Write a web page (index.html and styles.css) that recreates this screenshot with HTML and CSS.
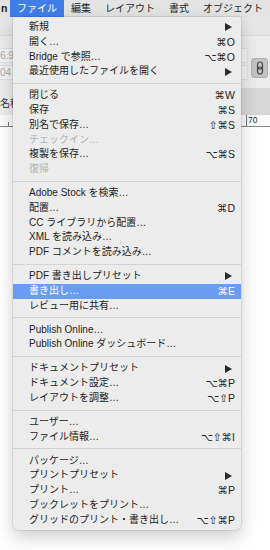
FILE: index.html
```html
<!DOCTYPE html>
<html lang="ja">
<head>
  <meta charset="UTF-8">
  <meta name="viewport" content="width=device-width, initial-scale=1.0">
  <title>ファイル メニュー</title>
  <link rel="stylesheet" href="styles.css">
</head>
<body>
  <div class="screen">

    <div class="menubar">
      <span class="app-name">n</span>
      <span class="menubar-item active">ファイル</span>
      <span class="menubar-item">編集</span>
      <span class="menubar-item">レイアウト</span>
      <span class="menubar-item">書式</span>
      <span class="menubar-item">オブジェクト</span>
    </div>

    <!-- the document window behind the open menu -->
    <div class="app-window">
      <div class="toolbar">
        <div class="toolbar-top"></div>
        <div class="toolbar-main">
          <div class="fields fields-left">
            <div class="field">6.9</div>
            <div class="field">04</div>
          </div>
          <div class="fields fields-right">
            <div class="field"></div>
            <div class="field"></div>
          </div>
          <div class="link-btn">
            <svg width="8" height="14" viewBox="0 0 8 14">
              <rect x="1.5" y="1" width="5" height="7" rx="2.5" fill="none" stroke="#444" stroke-width="1.2"/>
              <rect x="1.5" y="6" width="5" height="7" rx="2.5" fill="none" stroke="#444" stroke-width="1.2"/>
            </svg>
          </div>
        </div>
      </div>
      <div class="panel-band">
        <span class="panel-label">名称</span>
        <span class="panel-fill"></span>
      </div>
      <div class="ruler">
        <span class="ruler-left"><span class="tick"></span></span>
        <span class="ruler-right"><span class="tick"></span>70</span>
      </div>
      <div class="canvas"></div>
    </div>

    <ul class="menu">
      <li class="item"><span class="label">新規</span><span class="arrow"><svg width="7" height="8" viewBox="0 0 7 8"><polygon points="0,0 7,4 0,8"/></svg></span></li>
      <li class="item"><span class="label">開く…</span><span class="key">⌘O</span></li>
      <li class="item"><span class="label">Bridge で参照…</span><span class="key">⌥⌘O</span></li>
      <li class="item"><span class="label">最近使用したファイルを開く</span><span class="arrow"><svg width="7" height="8" viewBox="0 0 7 8"><polygon points="0,0 7,4 0,8"/></svg></span></li>
      <li class="separator"></li>
      <li class="item"><span class="label">閉じる</span><span class="key">⌘W</span></li>
      <li class="item"><span class="label">保存</span><span class="key">⌘S</span></li>
      <li class="item"><span class="label">別名で保存…</span><span class="key">⇧⌘S</span></li>
      <li class="item disabled"><span class="label">チェックイン…</span></li>
      <li class="item"><span class="label">複製を保存…</span><span class="key">⌥⌘S</span></li>
      <li class="item disabled"><span class="label">復帰</span></li>
      <li class="separator"></li>
      <li class="item"><span class="label">Adobe Stock を検索…</span></li>
      <li class="item"><span class="label">配置…</span><span class="key">⌘D</span></li>
      <li class="item"><span class="label">CC ライブラリから配置…</span></li>
      <li class="item"><span class="label">XML を読み込み…</span></li>
      <li class="item"><span class="label">PDF コメントを読み込み…</span></li>
      <li class="separator"></li>
      <li class="item"><span class="label">PDF 書き出しプリセット</span><span class="arrow"><svg width="7" height="8" viewBox="0 0 7 8"><polygon points="0,0 7,4 0,8"/></svg></span></li>
      <li class="item selected"><span class="label">書き出し…</span><span class="key">⌘E</span></li>
      <li class="item"><span class="label">レビュー用に共有…</span></li>
      <li class="separator"></li>
      <li class="item"><span class="label">Publish Online…</span></li>
      <li class="item"><span class="label">Publish Online ダッシュボード…</span></li>
      <li class="separator"></li>
      <li class="item"><span class="label">ドキュメントプリセット</span><span class="arrow"><svg width="7" height="8" viewBox="0 0 7 8"><polygon points="0,0 7,4 0,8"/></svg></span></li>
      <li class="item"><span class="label">ドキュメント設定…</span><span class="key">⌥⌘P</span></li>
      <li class="item"><span class="label">レイアウトを調整…</span><span class="key">⌥⇧P</span></li>
      <li class="separator"></li>
      <li class="item"><span class="label">ユーザー…</span></li>
      <li class="item"><span class="label">ファイル情報…</span><span class="key">⌥⇧⌘I</span></li>
      <li class="separator"></li>
      <li class="item"><span class="label">パッケージ…</span></li>
      <li class="item"><span class="label">プリントプリセット</span><span class="arrow"><svg width="7" height="8" viewBox="0 0 7 8"><polygon points="0,0 7,4 0,8"/></svg></span></li>
      <li class="item"><span class="label">プリント…</span><span class="key">⌘P</span></li>
      <li class="item"><span class="label">ブックレットをプリント…</span></li>
      <li class="item"><span class="label">グリッドのプリント・書き出し…</span><span class="key">⌥⇧⌘P</span></li>
    </ul>

  </div>
</body>
</html>
```

FILE: styles.css
```css
body {
  margin: 0;
  font-family: "Liberation Sans", "Noto Sans CJK JP", sans-serif;
  font-size: 10px;
  color: #222;
  background-color: #fff;
}

.screen {
  position: relative;
  width: 270px;
  height: 550px;
  overflow: hidden;
}

/* menu bar */

.menubar {
  display: flex;
  height: 17px;
  line-height: 17px;
  background-color: #e3e3e3;
  white-space: nowrap;
}

.app-name {
  width: 12px;
  padding-left: 1px;
  font-weight: bold;
  font-size: 10.5px;
}

.menubar-item {
  padding: 0 7px;
  color: #262626;
}

.menubar-item.active {
  background-color: #3f7ee6;
  color: white;
}

/* window behind */

.toolbar-top {
  height: 18px;
  background-color: #e6e6e6;
  border-bottom: 1px solid #dadada;
}

.toolbar-main {
  display: flex;
  height: 52px;
  background-color: #ececec;
}

.fields {
  display: flex;
  flex-direction: column;
  gap: 2px;
  padding-top: 12px;
}

.fields-left {
  margin-left: -22px;
}

.fields-right {
  margin-left: auto;
}

.field {
  width: 34px;
  height: 13px;
  line-height: 13px;
  padding-left: 21px;
  background-color: #f3f3f3;
  border: 1px solid #e0e0e0;
  color: #aaa;
}

.fields-right .field {
  width: 20px;
  padding-left: 0;
}

.link-btn {
  display: flex;
  align-items: center;
  justify-content: center;
  width: 15px;
  height: 18px;
  margin: 22px 2px 0 3px;
  background-color: #c4c4c4;
  border: 1px solid #b0b0b0;
  border-radius: 3px;
}

.panel-band {
  display: flex;
  height: 27px;
}

.panel-label {
  width: 13px;
  padding-top: 7px;
  background-color: #ececec;
  white-space: nowrap;
  color: #333;
}

.panel-fill {
  flex: 1;
  background-color: #d7d7d7;
}

.ruler {
  display: flex;
  height: 11px;
  background-color: #fafafa;
  border-bottom: 1px solid #888;
}

.ruler-left {
  width: 240px;
  position: relative;
}

.ruler-right {
  flex: 1;
  position: relative;
  padding-left: 8px;
  font-size: 8.5px;
  line-height: 11px;
  color: #333;
}

.tick {
  position: absolute;
  bottom: 0;
  width: 1px;
  height: 4px;
  background-color: #777;
}

.ruler-left .tick {
  left: 8px;
}

.ruler-right .tick {
  left: 6px;
  height: 11px;
}

.canvas {
  height: 420px;
  background-color: #fff;
}

/* dropdown menu */

.menu {
  position: absolute;
  top: 17px;
  left: 13px;
  width: 228px;
  margin: 0;
  padding: 3px 0;
  list-style: none;
  background-color: #ececec;
  border-radius: 0 0 5px 5px;
  box-shadow: 0 0 0 0.5px rgba(0, 0, 0, 0.15), 0 7px 18px rgba(0, 0, 0, 0.2);
}

.item {
  display: flex;
  align-items: center;
  height: 14.75px;
  padding: 0 6px 0 16px;
  line-height: 14.75px;
  white-space: nowrap;
  color: #232323;
}

.label {
  flex: 1;
}

.key {
  font-family: "Liberation Sans", "DejaVu Sans", sans-serif;
  font-size: 10.5px;
}

.arrow {
  display: flex;
  padding-right: 3px;
}

.arrow polygon {
  fill: #2a2a2a;
}

.item.disabled {
  color: #b2b2b2;
}

.item.selected {
  background-color: #6a9cf1;
  color: white;
}

.separator {
  height: 9.25px;
  display: flex;
  align-items: center;
}

.separator::before {
  content: "";
  flex: 1;
  height: 1px;
  background-color: #d3d3d3;
}
```
